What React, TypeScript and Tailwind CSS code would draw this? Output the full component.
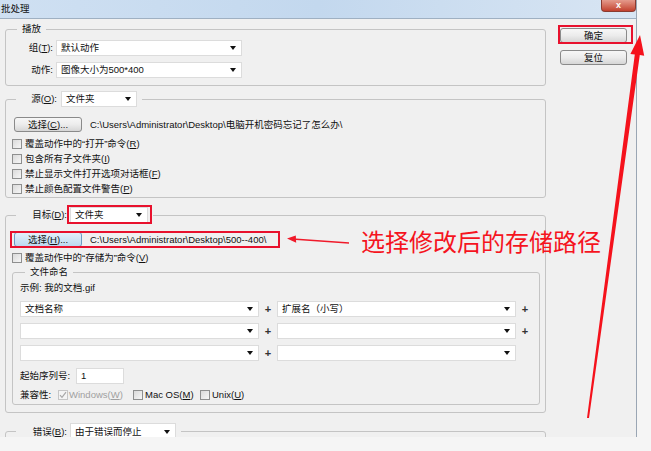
import React from 'react';

const Caret: React.FC = () => (
  <svg width="6" height="4" viewBox="0 0 6 4" className="shrink-0">
    <path d="M0 0h6L3 4z" fill="#111" />
  </svg>
);

const Select: React.FC<{ className: string; value?: string }> = ({ className, value }) => (
  <div className={`flex h-[16px] shrink-0 items-center justify-between border border-[#dcdcdc] bg-white pl-[4px] pr-[5px] ${className}`}>
    <span className="whitespace-nowrap">{value}</span>
    <Caret />
  </div>
);

const Btn: React.FC<{ className: string; hot?: boolean; children: React.ReactNode }> = ({ className, hot, children }) => (
  <div
    className={`flex h-[15px] shrink-0 items-center justify-center rounded-[3px] border ${
      hot
        ? 'border-[#6c9cc4] bg-linear-to-b from-[#e3f1fb] to-[#bcd9f0]'
        : 'border-[#8a8a8a] bg-linear-to-b from-[#f7f7f7] via-[#ececec] to-[#d6d6d6]'
    } ${className}`}
  >
    {children}
  </div>
);

const Check: React.FC<{ checked?: boolean; disabled?: boolean }> = ({ checked, disabled }) => (
  <span
    className={`flex h-[10px] w-[10px] shrink-0 items-center justify-center border ${
      disabled ? 'border-[#c6c6c6] bg-[#f4f4f4]' : 'border-[#8e8f8f] bg-linear-to-br from-[#dadada] to-[#f6f6f6]'
    }`}
  >
    {checked && (
      <svg width="8" height="8" viewBox="0 0 8 8">
        <path d="M1 4.2l2 2.2L7 1.2" stroke="#a8a8a8" strokeWidth="1.2" fill="none" />
      </svg>
    )}
  </span>
);

const CheckRow: React.FC<{ children: React.ReactNode }> = ({ children }) => (
  <div className="ml-[6px] flex h-[15px] items-center gap-[3px]">
    <Check />
    <span className="whitespace-nowrap">{children}</span>
  </div>
);

const Plus: React.FC<{ show?: boolean }> = ({ show = true }) => (
  <span className="flex w-[18px] shrink-0 justify-center text-[11px] font-bold text-[#333]">{show ? '+' : ''}</span>
);

const NameRow: React.FC<{ left?: string; right?: string; last?: boolean }> = ({ left, right, last }) => (
  <div className="flex items-center">
    <Select className="w-[239px]" value={left} />
    <Plus />
    <Select className="w-[239px]" value={right} />
    <Plus show={!last} />
  </div>
);

export default function App() {
  return (
    <div className="relative h-[451px] w-[651px] overflow-hidden bg-[#f5f5f5] font-['Liberation_Sans','Noto_Sans_CJK_SC',sans-serif] text-[9.5px] leading-[12px] text-[#111]">
      <div className="flex h-[437px] w-[637px] flex-col overflow-hidden border-r border-[#9aa6b4] bg-[#f0f0f0]">
        {/* title bar */}
        <div className="flex h-[19px] shrink-0 items-start justify-between border-b border-[#9fb0c2] bg-linear-to-r from-[#cfe0f2] via-[#c3d8ee] to-[#d8e5f3]">
          <span className="ml-[1px] self-center text-[9.5px]">批处理</span>
          <div className="flex h-[12px] w-[35px] items-center justify-center rounded-b-[4px] border border-t-0 border-[#8b3b30] bg-linear-to-b from-[#e49a8c] to-[#c2402e] text-[9px] font-bold leading-none text-white">
            x
          </div>
        </div>

        <div className="flex pl-[5px]">
          {/* left column */}
          <div className="flex w-[541px] shrink-0 flex-col pt-[4px]">
            {/* 播放 */}
            <fieldset className="rounded-[3px] border border-[#c4c4c4] px-0 pb-[7px]">
              <legend className="ml-[11px] px-[5px]">播放</legend>
              <div className="mt-[5px] flex items-center gap-[3px]">
                <span className="w-[47px] text-right">组(<u>T</u>):</span>
                <Select className="w-[186px]" value="默认动作" />
              </div>
              <div className="mt-[6px] flex items-center gap-[3px]">
                <span className="w-[47px] text-right">动作:</span>
                <Select className="w-[186px]" value="图像大小为500*400" />
              </div>
            </fieldset>

            {/* 源 */}
            <fieldset className="mt-[5px] rounded-[3px] border border-[#c4c4c4] px-0 pb-[1px]">
              <legend className="ml-[10px] pr-[5px]">
                <div className="flex items-center gap-[4px]">
                  <span className="w-[41px] text-right">源(<u>O</u>):</span>
                  <Select className="w-[76px]" value="文件夹" />
                </div>
              </legend>
              <div className="mt-[10px] flex items-center">
                <Btn className="ml-[8px] w-[68px]">
                  选择(<u>C</u>)...
                </Btn>
                <span className="ml-[8px] whitespace-nowrap">C:\Users\Administrator\Desktop\电脑开机密码忘记了怎么办\</span>
              </div>
              <div className="mt-[4px] flex flex-col">
                <CheckRow>
                  覆盖动作中的“打开”命令(<u>R</u>)
                </CheckRow>
                <CheckRow>
                  包含所有子文件夹(<u>I</u>)
                </CheckRow>
                <CheckRow>
                  禁止显示文件打开选项对话框(<u>F</u>)
                </CheckRow>
                <CheckRow>
                  禁止颜色配置文件警告(<u>P</u>)
                </CheckRow>
              </div>
            </fieldset>

            {/* 目标 */}
            <fieldset className="mt-[9px] rounded-[3px] border border-[#c4c4c4] px-0 pb-[7px]">
              <legend className="ml-[10px] pr-[5px]">
                <div className="flex items-center gap-[3px]">
                  <span className="w-[51px] text-right">目标(<u>D</u>):</span>
                  <div className="relative">
                    <Select className="w-[78px]" value="文件夹" />
                    <span className="absolute left-[-3px] top-[-2px] h-[19px] w-[85px] border-2 border-[#e8112d]" />
                  </div>
                </div>
              </legend>
              <div className="relative mt-[9px] flex items-center">
                <Btn hot className="ml-[8px] w-[68px]">
                  选择(<u>H</u>)...
                </Btn>
                <span className="ml-[8px] whitespace-nowrap">C:\Users\Administrator\Desktop\500--400\</span>
                <span className="absolute left-[4px] top-[-1px] h-[17px] w-[270px] border-2 border-[#e8112d]" />
              </div>
              <div className="mt-[3px]">
                <CheckRow>
                  覆盖动作中的“存储为”命令(<u>V</u>)
                </CheckRow>
              </div>

              {/* 文件命名 */}
              <fieldset className="ml-[6px] mt-[1px] w-[528px] rounded-[3px] border border-[#c4c4c4] px-0 pb-[3px]">
                <legend className="ml-[12px] px-[5px]">文件命名</legend>
                <div className="ml-[7px] flex flex-col">
                  <span className="mt-[4px]">示例: 我的文档.gif</span>
                  <div className="mt-[7px]">
                    <NameRow left="文档名称" right="扩展名（小写）" />
                  </div>
                  <div className="mt-[6px]">
                    <NameRow />
                  </div>
                  <div className="mt-[6px]">
                    <NameRow last />
                  </div>
                  <div className="mt-[7px] flex items-center">
                    <span className="w-[56px]">起始序列号:</span>
                    <div className="flex h-[16px] w-[48px] items-center border border-[#dcdcdc] bg-white pl-[4px]">1</div>
                  </div>
                  <div className="mt-[5px] flex h-[12px] items-center">
                    <span className="w-[38px]">兼容性:</span>
                    <div className="flex w-[75px] items-center gap-[1px]">
                      <Check checked disabled />
                      <span className="text-[#a0a0a0]">
                        Windows(<u>W</u>)
                      </span>
                    </div>
                    <div className="flex w-[67px] items-center gap-[2px]">
                      <Check />
                      <span>
                        Mac OS(<u>M</u>)
                      </span>
                    </div>
                    <div className="flex items-center gap-[2px]">
                      <Check />
                      <span>
                        Unix(<u>U</u>)
                      </span>
                    </div>
                  </div>
                </div>
              </fieldset>
            </fieldset>

            {/* 错误 */}
            <fieldset className="mt-[10px] rounded-[3px] border border-[#c4c4c4] px-0 pb-[8px]">
              <legend className="ml-[10px] pr-[5px]">
                <div className="flex items-center gap-[3px]">
                  <span className="w-[51px] text-right">错误(<u>B</u>):</span>
                  <Select className="h-[17px] w-[106px]" value="由于错误而停止" />
                </div>
              </legend>
              <div className="h-[20px]" />
            </fieldset>
          </div>

          {/* right column */}
          <div className="ml-[14px] flex flex-col gap-[7px] pt-[9px]">
            <div className="relative">
              <Btn className="w-[67px]">确定</Btn>
              <span className="absolute left-[-2px] top-[-3px] h-[19px] w-[75px] border-2 border-[#e8112d]" />
            </div>
            <Btn className="w-[67px]">复位</Btn>
          </div>
        </div>
      </div>

      {/* annotation arrows */}
      <svg className="pointer-events-none absolute inset-0" width="651" height="451" viewBox="0 0 651 451">
        <polygon
          points="587,418 634.8,54.5 630.4,53.9 640,35 644.2,55.7 639.8,55.1 589,418"
          fill="#f5121c"
        />
        <line x1="296" y1="239.3" x2="349" y2="243" stroke="#f01a2a" strokeWidth="1.4" />
        <polygon points="287,238.6 295.8,235.4 296.2,242.8" fill="#f01a2a" />
      </svg>
      <span className="absolute left-[361px] top-[227px] whitespace-nowrap font-['Noto_Sans_CJK_SC',sans-serif] text-[24px] leading-[28px] text-[#f5141e]">
        选择修改后的存储路径
      </span>
    </div>
  );
}
